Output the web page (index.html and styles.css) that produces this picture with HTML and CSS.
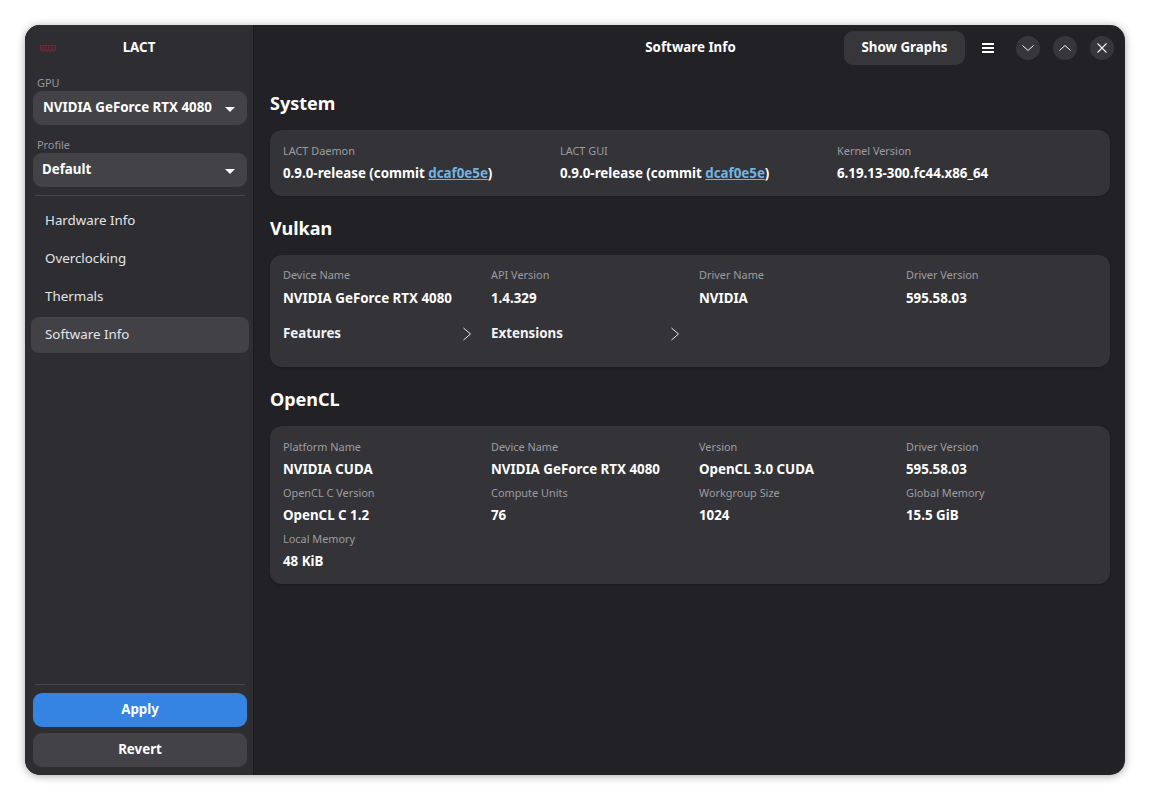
FILE: index.html
```html
<!DOCTYPE html>
<html lang="en">
<head>
    <meta charset="UTF-8">
    <title>LACT</title>
    <link rel="stylesheet" href="styles.css">
</head>
<body>
    <div class="window">
        <aside class="sidebar">
            <div class="sidebar-title">
                <svg class="app-icon" width="16" height="8" viewBox="0 0 16 8">
                    <rect x="0.5" y="1.5" width="15" height="4.5" fill="none" stroke="#6e2a33" stroke-width="1"/>
                    <path d="M3 1v5M6 1v5M9 1v5M12 1v5M1 7h14" stroke="#7a2530" stroke-width="1" fill="none"/>
                </svg>
                <span>LACT</span>
            </div>

            <div class="picker">
                <label>GPU</label>
                <div class="dropdown">
                    <span class="dropdown-text">NVIDIA GeForce RTX 4080</span>
                    <span class="arrow"></span>
                </div>
            </div>
            <div class="picker profile">
                <label>Profile</label>
                <div class="dropdown dropdown-tight">
                    <span>Default</span>
                    <span class="arrow"></span>
                </div>
            </div>

            <div class="separator"></div>

            <nav class="nav">
                <div class="nav-item">Hardware Info</div>
                <div class="nav-item">Overclocking</div>
                <div class="nav-item">Thermals</div>
                <div class="nav-item active">Software Info</div>
            </nav>

            <div class="separator"></div>

            <div class="actions">
                <button class="btn btn-apply">Apply</button>
                <button class="btn">Revert</button>
            </div>
        </aside>

        <main class="main">
            <header class="headerbar">
                <div class="headerbar-title">Software Info</div>
                <div class="headerbar-controls">
                    <button class="btn btn-graphs">Show Graphs</button>
                    <svg class="hamburger" width="12" height="10" viewBox="0 0 12 10">
                        <path d="M0 1h12M0 5h12M0 9h12" stroke="#fff" stroke-width="2"/>
                    </svg>
                    <div class="window-buttons">
                        <div class="circle-btn">
                            <svg width="12" height="12" viewBox="0 0 12 12"><path d="M0.5 3.5L6 8.5L11.5 3.5" fill="none" stroke="#f2f2f2" stroke-width="1"/></svg>
                        </div>
                        <div class="circle-btn">
                            <svg width="12" height="12" viewBox="0 0 12 12"><path d="M0.5 8.5L6 3.5L11.5 8.5" fill="none" stroke="#f2f2f2" stroke-width="1"/></svg>
                        </div>
                        <div class="circle-btn">
                            <svg width="12" height="12" viewBox="0 0 12 12"><path d="M1.5 1.5L10.5 10.5M10.5 1.5L1.5 10.5" fill="none" stroke="#f2f2f2" stroke-width="1.1"/></svg>
                        </div>
                    </div>
                </div>
            </header>

            <div class="content">
                <h2>System</h2>
                <section class="card grid-three card-system">
                    <div class="field">
                        <div class="field-label">LACT Daemon</div>
                        <div class="field-value">0.9.0-release (commit <a href="#">dcaf0e5e</a>)</div>
                    </div>
                    <div class="field">
                        <div class="field-label">LACT GUI</div>
                        <div class="field-value">0.9.0-release (commit <a href="#">dcaf0e5e</a>)</div>
                    </div>
                    <div class="field">
                        <div class="field-label">Kernel Version</div>
                        <div class="field-value">6.19.13-300.fc44.x86_64</div>
                    </div>
                </section>

                <h2>Vulkan</h2>
                <section class="card card-vulkan">
                    <div class="grid-four">
                        <div class="field">
                            <div class="field-label">Device Name</div>
                            <div class="field-value">NVIDIA GeForce RTX 4080</div>
                        </div>
                        <div class="field">
                            <div class="field-label">API Version</div>
                            <div class="field-value">1.4.329</div>
                        </div>
                        <div class="field">
                            <div class="field-label">Driver Name</div>
                            <div class="field-value">NVIDIA</div>
                        </div>
                        <div class="field">
                            <div class="field-label">Driver Version</div>
                            <div class="field-value">595.58.03</div>
                        </div>
                    </div>
                    <div class="grid-four expanders">
                        <div class="expander">
                            <span>Features</span>
                            <svg width="8" height="14" viewBox="0 0 8 14"><path d="M0.5 1L7.5 7L0.5 13" fill="none" stroke="#e8e8e8" stroke-width="1"/></svg>
                        </div>
                        <div class="expander">
                            <span>Extensions</span>
                            <svg width="8" height="14" viewBox="0 0 8 14"><path d="M0.5 1L7.5 7L0.5 13" fill="none" stroke="#e8e8e8" stroke-width="1"/></svg>
                        </div>
                    </div>
                </section>

                <h2>OpenCL</h2>
                <section class="card grid-four card-opencl">
                    <div class="field">
                        <div class="field-label">Platform Name</div>
                        <div class="field-value">NVIDIA CUDA</div>
                    </div>
                    <div class="field">
                        <div class="field-label">Device Name</div>
                        <div class="field-value">NVIDIA GeForce RTX 4080</div>
                    </div>
                    <div class="field">
                        <div class="field-label">Version</div>
                        <div class="field-value">OpenCL 3.0 CUDA</div>
                    </div>
                    <div class="field">
                        <div class="field-label">Driver Version</div>
                        <div class="field-value">595.58.03</div>
                    </div>
                    <div class="field">
                        <div class="field-label">OpenCL C Version</div>
                        <div class="field-value">OpenCL C 1.2</div>
                    </div>
                    <div class="field">
                        <div class="field-label">Compute Units</div>
                        <div class="field-value">76</div>
                    </div>
                    <div class="field">
                        <div class="field-label">Workgroup Size</div>
                        <div class="field-value">1024</div>
                    </div>
                    <div class="field">
                        <div class="field-label">Global Memory</div>
                        <div class="field-value">15.5 GiB</div>
                    </div>
                    <div class="field">
                        <div class="field-label">Local Memory</div>
                        <div class="field-value">48 KiB</div>
                    </div>
                </section>
            </div>
        </main>
    </div>
</body>
</html>
```

FILE: styles.css
```css
html, body {
    height: 100%;
}
body {
    margin: 0;
    padding: 25px;
    box-sizing: border-box;
    background: #ffffff;
    font-family: "Noto Sans", "Open Sans", sans-serif;
    color: #ffffff;
    overflow: hidden;
}
.window {
    display: flex;
    width: 1100px;
    height: 750px;
    border-radius: 15px;
    overflow: hidden;
    background: #222226;
    box-shadow: 0 1px 8px rgba(0, 0, 0, 0.35);
}

/* Sidebar */
.sidebar {
    width: 229px;
    flex: none;
    display: flex;
    flex-direction: column;
    padding: 0 4px 8px 6px;
    box-sizing: border-box;
    background: #2e2e32;
    border-right: 1px solid #1c1c1f;
}
.sidebar-title {
    position: relative;
    height: 44px;
    line-height: 44px;
    text-align: center;
    font-size: 13.33px;
    font-weight: 700;
    padding-right: 2px;
}
.app-icon {
    position: absolute;
    left: 9px;
    top: 19px;
}
.picker {
    display: flex;
    flex-direction: column;
    padding: 0 2px;
    margin-top: 6px;
}
.picker.profile {
    margin-top: 12px;
}
.picker label {
    font-size: 10.9px;
    line-height: 16px;
    padding-left: 4px;
    color: #97979b;
}
.dropdown {
    display: flex;
    justify-content: space-between;
    align-items: center;
    height: 34px;
    padding: 0 12px 2px 10px;
    box-sizing: border-box;
    border-radius: 9px;
    background: #434347;
    font-size: 13.33px;
    font-weight: 700;
}
.dropdown-tight {
    padding-left: 9px;
}
.arrow {
    width: 0;
    height: 0;
    border-left: 5px solid transparent;
    border-right: 5px solid transparent;
    border-top: 5px solid #fff;
    margin-top: 4px;
}
.separator {
    height: 1px;
    margin: 8px 4px 0 4px;
    background: #47474b;
    flex: none;
}
.nav {
    flex: 1;
    display: flex;
    flex-direction: column;
    gap: 2px;
    padding-top: 7px;
}
.nav-item {
    height: 36px;
    line-height: 34px;
    padding: 0 14px;
    border-radius: 8px;
    font-size: 13.33px;
    color: #e4e4e6;
}
.nav-item.active {
    background: #424246;
}
.actions {
    display: flex;
    flex-direction: column;
    gap: 6px;
    padding: 8px 0 0 2px;
    margin-right: 2px;
}
.btn {
    height: 34px;
    border: none;
    border-radius: 9px;
    background: #434347;
    color: #fff;
    font-family: inherit;
    font-size: 13.33px;
    font-weight: 700;
    padding: 0 0 2px;
}
.btn-apply {
    background: #3584e4;
}

/* Main */
.main {
    flex: 1;
    min-width: 0;
    display: flex;
    flex-direction: column;
}
.headerbar {
    position: relative;
    height: 46px;
    flex: none;
}
.headerbar-title {
    text-align: center;
    line-height: 44px;
    font-size: 13.33px;
    font-weight: 700;
    padding-left: 2px;
}
.headerbar-controls {
    position: absolute;
    top: 6px;
    right: 11px;
    display: flex;
    align-items: center;
}
.btn-graphs {
    width: 121px;
    background: #37373b;
    margin-right: 17px;
}
.hamburger {
    margin-right: 22px;
}
.window-buttons {
    display: flex;
    gap: 13px;
}
.circle-btn {
    width: 24px;
    height: 24px;
    border-radius: 50%;
    background: #37373b;
    display: flex;
    align-items: center;
    justify-content: center;
}
.content {
    padding: 0 15px 0 16px;
}
h2 {
    margin: 0;
    font-size: 18px;
    line-height: 24px;
    font-weight: 700;
}
.content h2:first-child {
    margin-top: 20px;
}
.card + h2 {
    margin-top: 20px;
}
.card {
    margin-top: 15px;
    border-radius: 12px;
    background: #343438;
    box-shadow: 0 1px 2px rgba(0, 0, 0, 0.2);
    padding: 13px;
}
.grid-three {
    display: grid;
    grid-template-columns: repeat(3, 277px);
}
.grid-four {
    display: grid;
    grid-template-columns: 208px 208px 207px 207px;
}
.card-opencl {
    row-gap: 6px;
}
.card-vulkan {
    padding-top: 12px;
}
.card-vulkan .field-value {
    margin-top: 5px;
}
.field-label {
    font-size: 10.9px;
    line-height: 16px;
    color: #9c9ca0;
}
.field-value {
    margin-top: 4px;
    font-size: 13.33px;
    line-height: 20px;
    font-weight: 700;
}
.field-value a {
    color: #74b3e0;
}
.expanders {
    margin-top: 15px;
    padding-bottom: 11px;
}
.expander {
    display: flex;
    justify-content: space-between;
    align-items: center;
    font-size: 13.33px;
    line-height: 20px;
    font-weight: 700;
    padding-right: 20px;
    color: #f2f2f2;
}
.expander svg {
    margin-top: 2px;
}
```
